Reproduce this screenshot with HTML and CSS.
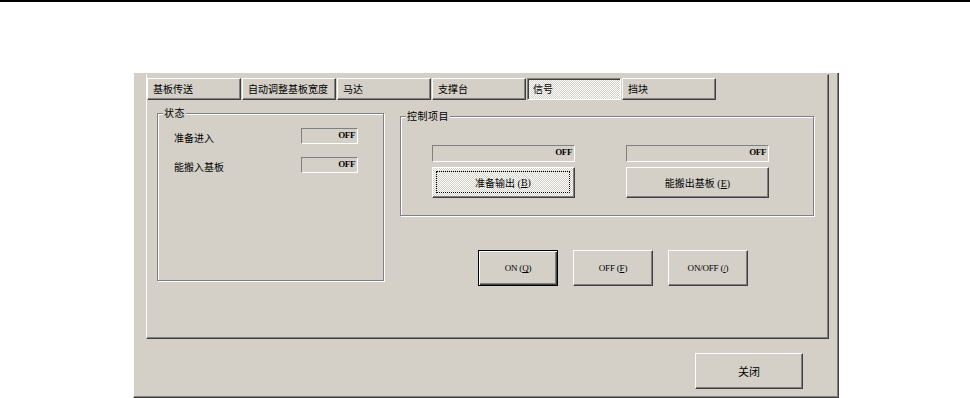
FILE: index.html
```html
<!DOCTYPE html>
<html lang="zh-CN">
<head>
    <meta charset="UTF-8">
    <title>信号</title>
    <link rel="stylesheet" href="styles.css">
</head>
<body>
    <div class="topline"></div>

    <div class="dialog">
        <div class="panel">
            <div class="tabs">
                <button class="tab">基板传送</button>
                <button class="tab">自动调整基板宽度</button>
                <button class="tab">马达</button>
                <button class="tab">支撑台</button>
                <button class="tab active">信号</button>
                <button class="tab">挡块</button>
            </div>

            <div class="page">
                <div class="group status">
                    <span class="group-title">状态</span>
                    <div class="status-grid">
                        <span class="label">准备进入</span>
                        <span class="field">OFF</span>
                        <span class="label">能搬入基板</span>
                        <span class="field">OFF</span>
                    </div>
                </div>

                <div class="right">
                    <div class="group control">
                        <span class="group-title">控制项目</span>
                        <div class="control-grid">
                            <span class="field">OFF</span>
                            <span class="field">OFF</span>
                            <button class="btn checked"><span class="focus">准备输出 (<u>B</u>)</span></button>
                            <button class="btn">能搬出基板 (<u>E</u>)</button>
                        </div>
                    </div>

                    <div class="switches">
                        <button class="btn default">ON (<u>Q</u>)</button>
                        <button class="btn">OFF (<u>F</u>)</button>
                        <button class="btn">ON/OFF (<u>/</u>)</button>
                    </div>
                </div>
            </div>
        </div>

        <div class="footer">
            <button class="btn close">关闭</button>
        </div>
    </div>
</body>
</html>
```

FILE: styles.css
```css
* {
    box-sizing: border-box;
    margin: 0;
    padding: 0;
}

body {
    background: #ffffff;
    overflow: hidden;
    font-family: "Noto Sans CJK SC", sans-serif;
    font-size: 10px;
    color: #000;
}

.topline {
    height: 2px;
    background: #000;
}

.dialog {
    width: 706px;
    height: 325px;
    margin: 71px 0 0 133px;
    padding: 1px 0 0 12px;
    background: #d4d0c8;
    border-left: 1px solid #ffffff;
    border-right: 1px solid #404040;
    border-bottom: 1px solid #404040;
    box-shadow: inset -1px -1px 0 #808080;
}

.panel {
    width: 683px;
    height: 265px;
    border: 1px solid;
    border-color: #d4d0c8 #404040 #404040 #ffffff;
    box-shadow: inset -1px -1px 0 #808080;
}

/* tab strip */
.tabs {
    display: flex;
    gap: 1px;
    margin-top: 3px;
}

button {
    font: inherit;
    color: inherit;
    background: #d4d0c8;
    cursor: pointer;
}

.tab {
    width: 94px;
    height: 22px;
    padding-left: 5px;
    text-align: left;
    line-height: 18px;
    border: 1px solid;
    border-color: #ffffff #404040 #404040 #ffffff;
    box-shadow: inset -1px -1px 0 #808080;
}

.tab.active {
    border-color: #808080 #ffffff #ffffff #808080;
    box-shadow: inset 1px 1px 0 #404040;
    background: repeating-conic-gradient(#ffffff 0 25%, #d4d0c8 0 50%) 0 0 / 2px 2px;
}

.page {
    display: flex;
    align-items: flex-start;
}

/* etched group boxes */
.group {
    position: relative;
    border: 1px solid #808080;
    box-shadow: 1px 1px 0 #ffffff, inset 1px 1px 0 #ffffff;
}

.group-title {
    position: absolute;
    top: -8px;
    left: 5px;
    padding: 0 1px;
    background: #d4d0c8;
    line-height: 14px;
    letter-spacing: 0.5px;
}

.status {
    width: 227px;
    height: 168px;
    margin: 13px 0 0 10px;
    padding: 14px 0 0 16px;
}

.status-grid {
    display: grid;
    grid-template-columns: 127px 57px;
    grid-auto-rows: 16px;
    row-gap: 13px;
    align-items: center;
}

.label {
    line-height: 14px;
    padding-top: 4px;
}

.field {
    height: 16px;
    padding-right: 2px;
    text-align: right;
    border: 1px solid;
    border-color: #808080 #ffffff #ffffff #808080;
    font-family: "Liberation Serif", serif;
    font-weight: bold;
    font-size: 9px;
    letter-spacing: -0.4px;
    line-height: 13px;
}

.right {
    margin-left: 16px;
}

.control {
    width: 414px;
    height: 100px;
    margin-top: 16px;
    padding: 28px 0 0 31px;
}

.control-grid {
    display: grid;
    grid-template-columns: 143px 143px;
    column-gap: 51px;
    row-gap: 5px;
}

.control-grid .field {
    height: 17px;
}

/* push buttons */
.btn {
    height: 31px;
    border: 1px solid;
    border-color: #ffffff #404040 #404040 #ffffff;
    box-shadow: inset -1px -1px 0 #808080;
    font-family: "Liberation Serif", "Noto Sans CJK SC", serif;
    font-size: 10px;
}

.btn.checked {
    padding: 3px 4px 4px 3px;
    background: repeating-conic-gradient(#ffffff 0 25%, #d4d0c8 0 50%) 0 0 / 2px 2px;
}

.focus {
    display: flex;
    align-items: center;
    justify-content: center;
    height: 100%;
    border: 1px dotted #000;
}

.switches {
    display: flex;
    gap: 15px;
    margin: 34px 0 0 78px;
}

.switches .btn {
    width: 80px;
    height: 36px;
    font-size: 9px;
    letter-spacing: -0.2px;
}

.btn.default {
    border-color: #000;
    box-shadow: inset 1px 1px 0 #ffffff, inset -1px -1px 0 #404040, inset -2px -2px 0 #808080;
}

.footer {
    display: flex;
    justify-content: flex-end;
    width: 683px;
    padding-right: 26px;
    margin-top: 14px;
}

.btn.close {
    width: 108px;
    height: 36px;
    font-family: "Noto Sans CJK SC", sans-serif;
    font-size: 11px;
}
```
